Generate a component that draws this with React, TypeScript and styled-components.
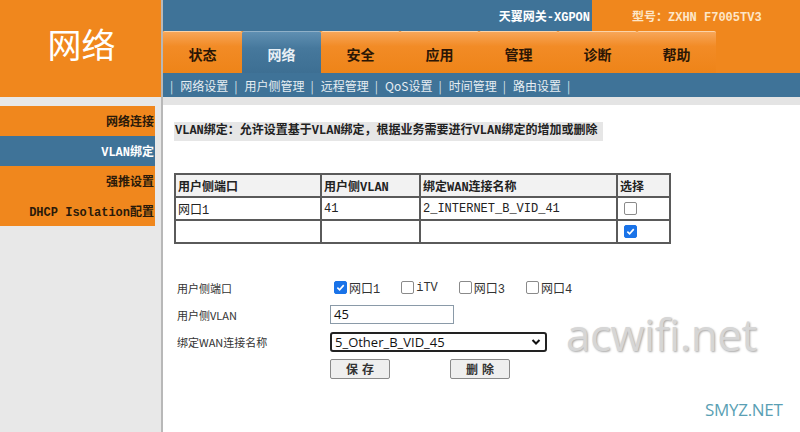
import React from 'react';
import styled, { createGlobalStyle } from 'styled-components';

const ORANGE = '#f0871d';
const BLUE = '#3f7398';
const SONG = '"Liberation Mono", "Noto Sans CJK SC", monospace';
const SANS = '"Noto Sans CJK SC", "Noto Sans", sans-serif';

const GlobalStyle = createGlobalStyle`
  html, body { margin: 0; padding: 0; background: #fff; }
  body { font-family: ${SANS}; }
`;

const Page = styled.div`
  position: relative;
  display: flex;
  width: 800px;
  height: 432px;
  overflow: hidden;
`;

const Sidebar = styled.div`
  width: 163px;
  flex: none;
  background: #e8e8e8;
  display: flex;
  flex-direction: column;
`;

const Logo = styled.div`
  height: 97px;
  background: ${ORANGE};
  color: #fff;
  font-family: ${SANS};
  font-size: 34px;
  display: flex;
  align-items: center;
  justify-content: center;
  padding-bottom: 10px;
  box-sizing: border-box;
`;

const Menu = styled.div`
  margin-top: 9px;
  width: 155px;
  display: flex;
  flex-direction: column;
`;

const MenuItem = styled.div<{ $active?: boolean }>`
  height: 30px;
  background: ${p => (p.$active ? BLUE : ORANGE)};
  color: ${p => (p.$active ? '#fff' : '#2a1a0a')};
  font-family: ${SONG};
  font-weight: bold;
  font-size: 12px;
  display: flex;
  align-items: center;
  justify-content: flex-end;
  padding-right: 1px;
  white-space: nowrap;
`;

const Main = styled.div`
  flex: 1;
  display: flex;
  flex-direction: column;
  border-left: 2px solid #b8b8b8;
  margin-left: -2px;
`;

const TopBar = styled.div`
  height: 31px;
  display: flex;
  font-family: ${SONG};
  font-weight: bold;
  font-size: 12px;
  color: #fff;
`;

const TopBlue = styled.div`
  flex: 1;
  background: ${BLUE};
  display: flex;
  align-items: center;
  justify-content: flex-end;
  padding-right: 2px;
`;

const TopOrange = styled.div`
  width: 208px;
  background: ${ORANGE};
  color: #fde6c8;
  display: flex;
  align-items: center;
  padding-left: 40px;
  box-sizing: border-box;
  white-space: nowrap;
`;

const TabRow = styled.div`
  height: 42px;
  display: flex;
  background: ${ORANGE};
`;

const Tab = styled.div<{ $active?: boolean }>`
  width: 79px;
  box-sizing: border-box;
  padding-top: 2px;
  border-top: 1px solid ${p => (p.$active ? '#8fb0c8' : '#fbd3a8')};
  background: ${p =>
    p.$active
      ? 'linear-gradient(#5f8fb2, #46789c 40%, #3d6f93)'
      : 'linear-gradient(#f7a658, #f28b26 35%, #ee8418)'};
  color: ${p => (p.$active ? '#e8f0f6' : '#2b1605')};
  font-family: ${SANS};
  font-weight: bold;
  font-size: 14px;
  display: flex;
  align-items: center;
  justify-content: center;
  border-radius: 2px 2px 0 0;
`;

const SubNav = styled.div`
  height: 24px;
  background: ${BLUE};
  color: #e6edf2;
  font-family: ${SANS};
  font-size: 12px;
  display: flex;
  align-items: center;
  padding-left: 1px;
  white-space: nowrap;
`;

const Sep = styled.span`
  margin: 0 7px 0 6px;
  color: #d8e2ea;
`;

const Strip = styled.div`
  height: 8px;
  background: #e4e4e4;
`;

const Content = styled.div`
  flex: 1;
  background: #fff;
  padding: 17px 0 0 11px;
  font-family: ${SONG};
  font-size: 12px;
  color: #222;
`;

const Desc = styled.div`
  display: inline-block;
  background: #e6e6e6;
  font-weight: bold;
  font-size: 12px;
  line-height: 19px;
  padding: 0 6px 0 1px;
  color: #222;
`;

const Table = styled.table`
  margin-top: 32px;
  border-collapse: collapse;
  border: 2px solid #5a5a5a;
  font-family: ${SONG};
  font-size: 12px;
`;

const Th = styled.th<{ $w: number }>`
  width: ${p => p.$w}px;
  height: 23px;
  text-align: left;
  padding: 0 2px;
  border: 2px solid #5a5a5a;
  background: #f2f2f2;
  font-weight: bold;
  box-sizing: border-box;
`;

const Td = styled.td`
  height: 21px;
  padding: 0 2px;
  border: 2px solid #5a5a5a;
  font-weight: normal;
`;

const Box = styled.span<{ $checked?: boolean }>`
  display: inline-flex;
  align-items: center;
  justify-content: center;
  width: 11px;
  height: 11px;
  border-radius: 2px;
  border: 1px solid ${p => (p.$checked ? '#1a73e8' : '#8a8a8a')};
  background: ${p => (p.$checked ? '#1a73e8' : '#fff')};
  vertical-align: middle;
  margin: 0 2px 0 4px;
`;

const Check = () => (
  <svg width="9" height="9" viewBox="0 0 10 10">
    <path d="M1.5 5.2 L4 7.6 L8.6 2.4" stroke="#fff" strokeWidth="1.8" fill="none" />
  </svg>
);

const Form = styled.div`
  margin-top: 30px;
  display: grid;
  grid-template-columns: 153px auto;
  grid-auto-rows: 27px;
  padding-left: 3px;
  align-items: center;
  font-family: ${SANS};
  font-size: 11px;
  color: #333;
`;

const Label = styled.div`
  font-family: ${SANS};
`;

const Options = styled.div`
  display: flex;
  align-items: center;
  padding-left: 2px;
  font-family: ${SONG};
  font-size: 12px;
`;

const Option = styled.label`
  display: inline-flex;
  align-items: center;
  margin-right: 17px;
  &:first-child > span { margin-left: 2px; }
`;

const Input = styled.div`
  width: 124px;
  height: 19px;
  border: 1px solid #8a9aa8;
  box-sizing: border-box;
  font-family: "Open Sans", "Noto Sans", sans-serif;
  font-size: 13px;
  color: #111;
  padding-left: 3px;
  line-height: 17px;
`;

const Select = styled.div`
  width: 217px;
  height: 20px;
  border: 2px solid #222;
  border-radius: 3px;
  box-sizing: border-box;
  font-family: "Open Sans", "Noto Sans", sans-serif;
  font-size: 13px;
  color: #111;
  padding: 0 4px 0 3px;
  display: flex;
  align-items: center;
  justify-content: space-between;
`;

const Buttons = styled.div`
  display: flex;
  gap: 60px;
`;

const Button = styled.div`
  width: 60px;
  height: 20px;
  border: 1px solid #8a8a8a;
  border-radius: 2px;
  background: #efefef;
  box-sizing: border-box;
  font-family: ${SANS};
  font-weight: bold;
  font-size: 12px;
  letter-spacing: 4px;
  color: #333;
  display: flex;
  align-items: center;
  justify-content: center;
  padding-left: 4px;
`;

const Watermark = styled.div`
  position: absolute;
  left: 566px;
  top: 304px;
  font-family: "Open Sans", "Noto Sans", sans-serif;
  font-size: 44px;
  letter-spacing: -0.5px;
  color: #d6d6d6;
  text-shadow: 1px 1px 2px #a8a8a8;
`;

const Stamp = styled.div`
  position: absolute;
  left: 705px;
  top: 398px;
  font-family: "Open Sans", "Noto Sans", sans-serif;
  font-size: 17px;
  letter-spacing: -0.3px;
  color: #5a9fb4;
`;

const tabs = ['状态', '网络', '安全', '应用', '管理', '诊断', '帮助'];
const subs = ['网络设置', '用户侧管理', '远程管理', 'QoS设置', '时间管理', '路由设置'];
const ports = [
  { label: '网口1', checked: true },
  { label: 'iTV', checked: false },
  { label: '网口3', checked: false },
  { label: '网口4', checked: false },
];

export default function App() {
  return (
    <Page>
      <GlobalStyle />
      <Sidebar>
        <Logo>网络</Logo>
        <Menu>
          <MenuItem>网络连接</MenuItem>
          <MenuItem $active>VLAN绑定</MenuItem>
          <MenuItem>强推设置</MenuItem>
          <MenuItem>DHCP Isolation配置</MenuItem>
        </Menu>
      </Sidebar>
      <Main>
        <TopBar>
          <TopBlue>天翼网关-XGPON</TopBlue>
          <TopOrange>型号：ZXHN F7005TV3</TopOrange>
        </TopBar>
        <TabRow>
          {tabs.map(t => (
            <Tab key={t} $active={t === '网络'}>{t}</Tab>
          ))}
        </TabRow>
        <SubNav>
          <Sep>|</Sep>
          {subs.map(s => (
            <React.Fragment key={s}>
              {s}
              <Sep>|</Sep>
            </React.Fragment>
          ))}
        </SubNav>
        <Strip />
        <Content>
          <Desc>VLAN绑定：允许设置基于VLAN绑定，根据业务需要进行VLAN绑定的增加或删除</Desc>
          <Table>
            <thead>
              <tr>
                <Th $w={146}>用户侧端口</Th>
                <Th $w={99}>用户侧VLAN</Th>
                <Th $w={197}>绑定WAN连接名称</Th>
                <Th $w={53}>选择</Th>
              </tr>
            </thead>
            <tbody>
              <tr>
                <Td>网口1</Td>
                <Td>41</Td>
                <Td>2_INTERNET_B_VID_41</Td>
                <Td><Box /></Td>
              </tr>
              <tr>
                <Td />
                <Td />
                <Td />
                <Td><Box $checked><Check /></Box></Td>
              </tr>
            </tbody>
          </Table>
          <Form>
            <Label>用户侧端口</Label>
            <Options>
              {ports.map(p => (
                <Option key={p.label}>
                  <Box $checked={p.checked}>{p.checked && <Check />}</Box>
                  {p.label}
                </Option>
              ))}
            </Options>
            <Label>用户侧VLAN</Label>
            <Input>45</Input>
            <Label>绑定WAN连接名称</Label>
            <Select>
              <span>5_Other_B_VID_45</span>
              <svg width="10" height="8" viewBox="0 0 10 8">
                <path d="M1.5 2 L5 5.5 L8.5 2" stroke="#111" strokeWidth="2" fill="none" />
              </svg>
            </Select>
            <span />
            <Buttons>
              <Button>保存</Button>
              <Button>删除</Button>
            </Buttons>
          </Form>
        </Content>
      </Main>
      <Watermark>acwifi.net</Watermark>
      <Stamp>SMYZ.NET</Stamp>
    </Page>
  );
}
